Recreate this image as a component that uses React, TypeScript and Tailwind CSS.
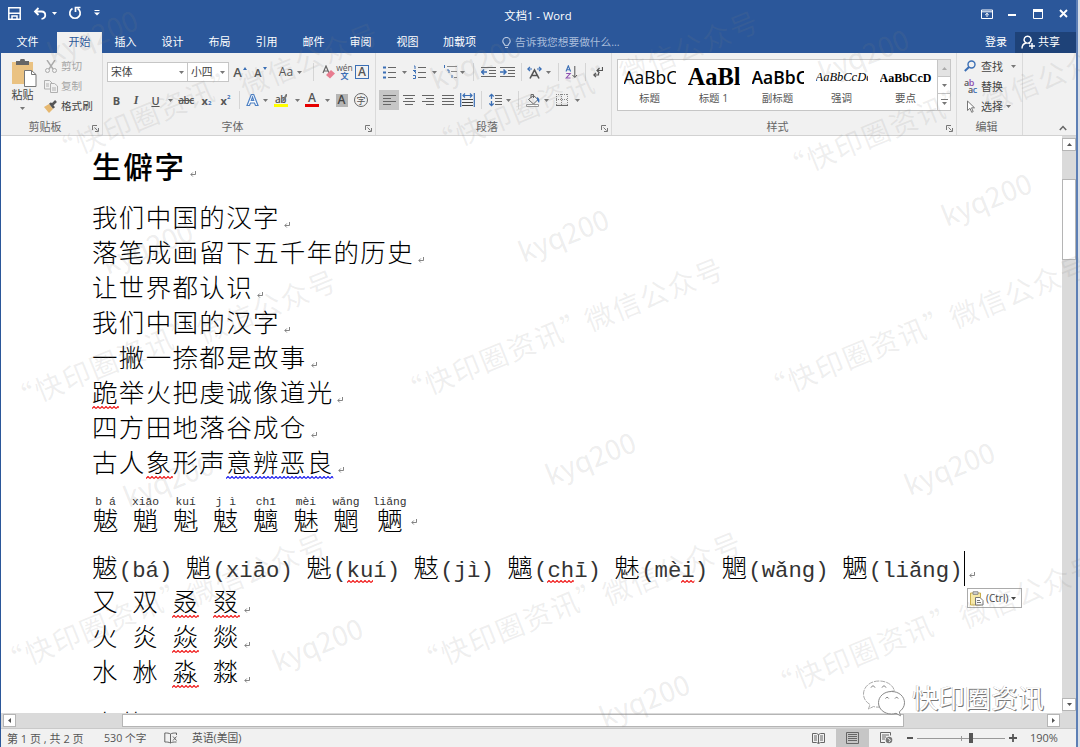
import type { ReactNode } from "react";
import { clsx } from "clsx";

const UI_FONT = "font-['Open_Sans','Noto_Sans_CJK_SC',sans-serif]";
const DOC_FONT = "font-['Liberation_Mono','Noto_Sans_CJK_SC',monospace]";

const tabs = [
  { label: "文件", width: "w-[56px] pr-[3px]" },
  { label: "开始", width: "w-[45px]", active: true },
  { label: "插入", width: "w-[47px]" },
  { label: "设计", width: "w-[47px]" },
  { label: "布局", width: "w-[47px]" },
  { label: "引用", width: "w-[47px]" },
  { label: "邮件", width: "w-[47px]" },
  { label: "审阅", width: "w-[47px]" },
  { label: "视图", width: "w-[47px]" },
  { label: "加载项", width: "w-[57px]" },
];

const styles = [
  { sample: "AaBbC", name: "标题", font: "text-[17.5px] font-['Open_Sans',sans-serif]" },
  { sample: "AaBl", name: "标题 1", font: "text-[24.5px] font-bold font-['Liberation_Serif',serif]" },
  { sample: "AaBbC", name: "副标题", font: "text-[17.5px] font-semibold font-['Open_Sans',sans-serif]" },
  { sample: "AaBbCcDc", name: "强调", font: "text-[12.5px] italic text-[#444] font-['Liberation_Serif',serif]" },
  { sample: "AaBbCcD", name: "要点", font: "text-[12px] font-bold font-['Liberation_Serif',serif]" },
];

type Mark = "red" | "blue";
type Run = { text: string; mark?: Mark };

const verses: Run[][] = [
  [{ text: "我们中国的汉字" }],
  [{ text: "落笔成画留下五千年的历史" }],
  [{ text: "让世界都认识" }],
  [{ text: "我们中国的汉字" }],
  [{ text: "一撇一捺都是故事" }],
  [{ text: "跪", mark: "red" }, { text: "举火把虔诚像道光" }],
  [{ text: "四方田地落谷成仓" }],
  [{ text: "古人" }, { text: "象", mark: "red" }, { text: "形声" }, { text: "意辨恶良", mark: "blue" }],
];

const rubies = [
  ["魃", "b á"],
  ["魈", "xiāo"],
  ["魁", "kuí"],
  ["鬾", "j ì"],
  ["魑", "chī"],
  ["魅", "mèi"],
  ["魍", "wǎng"],
  ["魉", "liǎng"],
];

const glossary: Run[] = [
  { text: "魃(bá) 魈(xiāo) 魁(" },
  { text: "ku", mark: "red" },
  { text: "í) 鬾(jì) 魑(" },
  { text: "ch", mark: "red" },
  { text: "ī) 魅(mè" },
  { text: "i", mark: "red" },
  { text: ") 魍(wǎng) 魉(liǎng)" },
];

const stacked: Run[][] = [
  [{ text: "又 双 " }, { text: "叒", mark: "red" }, { text: " " }, { text: "叕", mark: "red" }],
  [{ text: "火 炎 " }, { text: "焱", mark: "red" }, { text: " 燚" }],
  [{ text: "水 沝 " }, { text: "淼", mark: "red" }, { text: " 㵘" }],
];

const watermarks = [
  { text: "kyq200", x: 92, y: 35 },
  { text: "kyq200", x: 475, y: 61 },
  { text: "kyq200", x: 863, y: 54 },
  { text: "kyq200", x: 147, y: 246 },
  { text: "kyq200", x: 563, y: 234 },
  { text: "kyq200", x: 986, y: 198 },
  { text: "kyq200", x: 168, y: 479 },
  { text: "kyq200", x: 590, y: 457 },
  { text: "kyq200", x: 949, y: 467 },
  { text: "kyq200", x: 317, y: 643 },
  { text: "kyq200", x: 644, y: 699 },
  { text: "微信公众号", x: 309, y: 58 },
  { text: "微信公众号", x: 689, y: 46 },
  { text: "微信公众号", x: 1052, y: 74 },
  { text: "微信公众号", x: 267, y: 305 },
  { text: "微信公众号", x: 654, y: 293 },
  { text: "微信公众号", x: 1019, y: 290 },
  { text: "微信公众号", x: 257, y: 568 },
  { text: "微信公众号", x: 672, y: 567 },
  { text: "微信公众号", x: 1029, y: 590 },
  { text: "“快印圈资讯”", x: 145, y: 115 },
  { text: "“快印圈资讯”", x: 525, y: 107 },
  { text: "“快印圈资讯”", x: 876, y: 132 },
  { text: "“快印圈资讯”", x: 104, y: 363 },
  { text: "“快印圈资讯”", x: 494, y: 356 },
  { text: "“快印圈资讯”", x: 857, y: 353 },
  { text: "“快印圈资讯”", x: 94, y: 626 },
  { text: "“快印圈资讯”", x: 510, y: 626 },
  { text: "“快印圈资讯”", x: 864, y: 650 },
];

function Svg({ w, h, className, children }: { w: number; h: number; className?: string; children: ReactNode }) {
  return (
    <svg width={w} height={h} viewBox={`0 0 ${w} ${h}`} fill="none" className={clsx("shrink-0", className)}>
      {children}
    </svg>
  );
}

function Cell({ w, children, className }: { w: string; children?: ReactNode; className?: string }) {
  return <div className={clsx("flex h-5 shrink-0 items-center justify-center", w, className)}>{children}</div>;
}

function Caret({ className = "text-[#777]" }: { className?: string }) {
  return (
    <Svg w={5} h={3} className={className}>
      <path d="M0 0h5L2.5 3z" fill="currentColor" />
    </Svg>
  );
}

function Divider({ w }: { w: string }) {
  return (
    <Cell w={w}>
      <div className="h-[18px] w-px bg-[#d5d5d5]" />
    </Cell>
  );
}

function Launcher() {
  return (
    <Svg w={7} h={7} className="mt-[3px] text-[#777]">
      <path d="M.5 5V.5H5M2.5 2.5l3 3M6.5 3v3.5H3" stroke="currentColor" />
    </Svg>
  );
}

function Group({ label, w, children, launcher = true }: { label: string; w: string; children: ReactNode; launcher?: boolean }) {
  return (
    <section className={clsx("flex shrink-0 flex-col border-r border-[#dadada]", w)}>
      <div className="h-[64px]">{children}</div>
      <div className="flex h-[18px] items-center pr-[3px] pt-px">
        <span className="flex-1 pr-[3px] text-center text-[11px] leading-none text-[#666]">{label}</span>
        {launcher && <Launcher />}
      </div>
    </section>
  );
}

// Horizontal text lines, each given as [x1, x2, y]
function Lines({ rows, color = "#666" }: { rows: number[][]; color?: string }) {
  return (
    <>
      {rows.map(([a, b, y]) => (
        <path key={y} d={`M${a} ${y}H${b}`} stroke={color} />
      ))}
    </>
  );
}

function TitleBar() {
  return (
    <header className="flex h-8 items-center bg-[#2b579a] text-white">
      <div className="flex w-[419px] items-center pb-[6px] pl-[7px]">
        <Svg w={13} h={13}>
          <path d="M.8.8h11.4v11.4H.8zM1 6.300h11M4 12V9h5v3" stroke="#fff" strokeWidth="1.500" />
        </Svg>
        <Svg w={14} h={13} className="ml-3">
          <path d="M5.5 1 2 4.5 5.5 8M2 4.5h6.5c5 0 5 7.300 0 7.300" stroke="#fff" strokeWidth="1.800" />
        </Svg>
        <Caret className="ml-[5px] text-white" />
        <Svg w={14} h={14} className="ml-[11px]">
          <path d="M4.500 2.500A5.200 5.200 0 1 0 9.500 2.500M7.500 6V1.500h5" stroke="#fff" strokeWidth="1.700" />
        </Svg>
        <Svg w={6} h={6} className="ml-[12px]">
          <path d="M.5 .5h5" stroke="#fff" />
          <path d="M0 2.500h6l-3 3z" fill="#fff" />
        </Svg>
      </div>
      <h1 className="w-[236px] text-center text-[11.300px] leading-none">文档1 - Word</h1>
      <div className="flex flex-1 items-center justify-end pb-[5px] pr-[8px]">
        <Svg w={12} h={10}>
          <path d="M.5 1h11v8.500H.5zM.5 2.800h11M6 8V4.500M4.200 6 6 4.300 7.800 6" stroke="#fff" />
        </Svg>
        <Svg w={10} h={10} className="ml-[14px]">
          <path d="M1 6h8" stroke="#fff" strokeWidth="2" />
        </Svg>
        <Svg w={10} h={10} className="ml-4">
          <path d="M.5 .5h9v9h-9z" stroke="#fff" />
          <path d="M0 0h10v3H0z" fill="#fff" />
        </Svg>
        <Svg w={9} h={9} className="ml-4">
          <path d="m1 1 7 7M8 1 1 8" stroke="#fff" strokeWidth="1.900" />
        </Svg>
      </div>
    </header>
  );
}

function TabBar() {
  return (
    <nav className="flex h-[21px] items-center bg-[#2b579a] text-[11px] leading-none text-white">
      {tabs.map((tab) => (
        <span
          key={tab.label}
          className={clsx(
            "flex h-full shrink-0 items-center justify-center pb-[3px]",
            tab.width,
            tab.active && "bg-[#f1f1f1] text-[#2b579a]"
          )}
        >
          {tab.label}
        </span>
      ))}
      <Svg w={9} h={12} className="ml-[14px]">
        <path d="M3 8.500C3 7 .8 6.500.8 4.200a3.700 3.700 0 0 1 7.400 0C8.200 6.500 6 7 6 8.500zM3 10.500h3" stroke="#b9c9e2" strokeWidth="1.200" />
      </Svg>
      <span className="ml-[4px] pb-px text-[10.700px] text-[#a9bddb]">告诉我您想要做什么...</span>
      <div className="flex h-full flex-1 items-center justify-end">
        <span className="mr-[8px] pb-[2px]">登录</span>
        <div className="flex h-full w-[61px] items-center gap-[3px] bg-[#1e4278] pb-[2px] pl-[6px]">
          <Svg w={14} h={14}>
            <path d="M6.500 8.200a3.500 3.500 0 1 1 .2 0M1 13.500c0-3 2-5 4-5.500M11 8v6M8 11h6M8 8.200l1 .8" stroke="#fff" strokeWidth="1.400" />
          </Svg>
          <span>共享</span>
        </div>
      </div>
    </nav>
  );
}

function ClipboardGroup() {
  return (
    <Group label="剪贴板" w="w-[102px]">
      <div className="flex h-full">
        <div className="flex w-[43px] flex-col items-center pt-[6px]">
          <Svg w={26} h={28} className="ml-[3px]">
            <path d="M1 3h21v22H1z" fill="#eac282" />
            <path d="M5 2h4a2.500 2.500 0 0 1 5 0h4v4H5z" fill="#666" />
            <path d="M13.500 11.500h7l4.500 4v12H13.500z" fill="#fff" stroke="#777" />
            <path d="M20.500 11.500v4H25" stroke="#777" />
          </Svg>
          <span className="mt-[2px] text-[11px] leading-none text-[#444]">粘贴</span>
          <Caret className="mt-[7px] text-[#777]" />
        </div>
        <div className="flex flex-col gap-2 pt-[7px] text-[10.600px] leading-none text-[#a5a5a5]">
          <div className="flex h-3 items-center gap-[3px]">
            <Svg w={14} h={13}>
              <path d="m3 0 6 9M11 0 5 9" stroke="#aaa" strokeWidth="1.400" />
              <circle cx="3.500" cy="10.500" r="2" stroke="#aaa" />
              <circle cx="10.500" cy="10.500" r="2" stroke="#aaa" />
            </Svg>
            剪切
          </div>
          <div className="flex h-3 items-center gap-[3px]">
            <Svg w={14} h={13}>
              <path d="M.5.5h5L8 3v6H.5zM2 4h3M2 6h3" stroke="#b0b0b0" />
              <path d="M6.500 3.500h4l3 2.500v6.500h-7z" fill="#f1f1f1" stroke="#b0b0b0" />
              <path d="M8 8h4M8 10h4" stroke="#b0b0b0" />
            </Svg>
            复制
          </div>
          <div className="flex h-3 items-center gap-[3px] text-[#444]">
            <Svg w={14} h={13}>
              <path d="m0 7 5-3 4 5-4 4z" fill="#e6b870" />
              <path d="m6 3 4 5M8 5l4-4" stroke="#555" strokeWidth="2.600" />
            </Svg>
            格式刷
          </div>
        </div>
      </div>
    </Group>
  );
}

function FontGroup() {
  return (
    <Group label="字体" w="w-[273px]">
      <div className="flex flex-col gap-2 pl-1 pt-[9px] leading-none text-[#555]">
        <div className="flex h-5 items-center">
          <div className="flex h-5 w-[81px] items-center justify-between border border-[#c6c6c6] bg-white px-[3px] text-[10.800px] text-[#444]">
            宋体 <Caret />
          </div>
          <div className="flex h-5 w-[41px] items-center justify-between border border-l-0 border-[#c6c6c6] bg-white px-[3px] text-[10.800px] text-[#444]">
            小四 <Caret />
          </div>
          <Cell w="w-[22px]" className="gap-px">
            <span className="text-[13px] font-semibold">A</span>
            <Svg w={4} h={10}><path d="M0 3h4L2 0z" fill="#3b6fb5" /></Svg>
          </Cell>
          <Cell w="w-[19px]" className="gap-px">
            <span className="text-[11px] font-semibold">A</span>
            <Svg w={4} h={10}><path d="M0 0h4L2 3z" fill="#3b6fb5" /></Svg>
          </Cell>
          <Cell w="w-[30px]" className="pl-[2px] text-[12px]">Aa</Cell>
          <Cell w="w-[6px]"><Caret className="-ml-2 text-[#777]" /></Cell>
          <Divider w="w-[15px]" />
          <Cell w="w-[14px]">
            <Svg w={13} h={14}>
              <path d="M1 8 4 1l3 7M2 6h4" stroke="#666" strokeWidth="1.200" />
              <path d="m4 10 5-5 4 3.500-5 5z" fill="#e87d90" />
            </Svg>
          </Cell>
          <Cell w="w-[19px]" className="flex-col">
            <span className="text-[8.500px] leading-[8px]">wén</span>
            <span className="text-[8px] font-bold leading-[8px] text-[#3b6fb5]">文</span>
          </Cell>
          <Cell w="w-[16px]">
            <span className="flex size-[14px] items-center justify-center border border-[#3b6fb5] text-[12px] font-semibold">A</span>
          </Cell>
        </div>
        <div className="flex h-5 items-center">
          <Cell w="w-[19px]" className="text-[11px] font-bold">B</Cell>
          <Cell w="w-[20px]" className="font-['Liberation_Serif',serif] text-[12px] font-bold italic">I</Cell>
          <Cell w="w-[19px]" className="text-[11px] font-semibold underline">U</Cell>
          <Cell w="w-[10px]"><Caret /></Cell>
          <Cell w="w-[22px]" className="text-[10px] font-semibold tracking-tighter line-through">abc</Cell>
          <Cell w="w-[19px]" className="text-[11px] font-bold">
            x<span className="pt-[6px] text-[6px] text-[#3b6fb5]">2</span>
          </Cell>
          <Cell w="w-[19px]" className="text-[11px] font-bold">
            x<span className="pb-[7px] text-[6px] text-[#3b6fb5]">2</span>
          </Cell>
          <Divider w="w-[8px]" />
          <Cell w="w-[18px]">
            <Svg w={13} h={14}>
              <path d="M1 12.500 5.300 1.500h2.400L12 12.500H9.500L8.500 10h-4l-1 2.500zM5.300 7.500h2.400L6.500 4z" stroke="#4d80c4" strokeWidth="1.200" fill="#fff" />
            </Svg>
          </Cell>
          <Cell w="w-[9px]"><Caret /></Cell>
          <Cell w="w-[22px]">
            <div className="flex flex-col items-center">
              <div className="flex items-center">
                <span className="text-[10px] font-semibold leading-[10px] tracking-tighter">ab</span>
                <Svg w={5} h={9} className="-ml-1"><path d="M5 0 1 7" stroke="#777" strokeWidth="2" /></Svg>
              </div>
              <div className="h-[3px] w-[14px] bg-[#ffff00]" />
            </div>
          </Cell>
          <Cell w="w-[10px]"><Caret /></Cell>
          <Cell w="w-[20px]">
            <div className="flex flex-col items-center">
              <span className="text-[12px] font-semibold leading-[10px]">A</span>
              <div className="mt-px h-[3px] w-[14px] bg-[#e60000]" />
            </div>
          </Cell>
          <Cell w="w-[10px]"><Caret /></Cell>
          <Cell w="w-[19px]">
            <span className="flex h-[13px] w-3 items-center justify-center bg-[#b5b5b5] text-[12px] font-semibold text-[#444]">A</span>
          </Cell>
          <Cell w="w-[20px]">
            <span className="flex size-[14px] items-center justify-center rounded-full border border-[#666] text-[9px]">字</span>
          </Cell>
        </div>
      </div>
    </Group>
  );
}

function ParagraphGroup() {
  return (
    <Group label="段落" w="w-[236px]">
      <div className="flex flex-col gap-2 pl-[5px] pt-[9px]">
        <div className="flex h-5 items-center">
          <Cell w="w-[17px]">
            <Svg w={13} h={13}>
              <path d="M0 1.500h3M0 6.500h3M0 11.500h3" stroke="#3b6fb5" strokeWidth="2" />
              <Lines rows={[[5, 13, 1.5], [5, 13, 6.5], [5, 13, 11.5]]} />
            </Svg>
          </Cell>
          <Cell w="w-[13px]"><Caret /></Cell>
          <Cell w="w-[17px]">
            <Svg w={13} h={14}>
              <path d="M1 1h1v3M0 5.500h3M1 6.500h1.500v2M0 10.500h2.500v3H0" stroke="#3b6fb5" />
              <Lines rows={[[5, 13, 2.5], [5, 13, 7.5], [5, 13, 12.5]]} />
            </Svg>
          </Cell>
          <Cell w="w-[13px]"><Caret /></Cell>
          <Cell w="w-[17px]">
            <Svg w={14} h={14}>
              <path d="M1.500 0v3M4 5h2v3M9 10v3" stroke="#3b6fb5" />
              <Lines rows={[[4, 14, 1.5], [8, 14, 6.5], [11, 14, 12.5]]} color="#888" />
            </Svg>
          </Cell>
          <Cell w="w-[9px]"><Caret /></Cell>
          <Divider w="w-[12px]" />
          <Cell w="w-[18px]">
            <Svg w={15} h={13}>
              <Lines rows={[[0, 15, 1.5], [8, 15, 4.5], [8, 15, 7.5], [0, 15, 10.5]]} />
              <path d="M0 6h6M3 3.500.8 6 3 8.500" stroke="#3b6fb5" strokeWidth="1.500" />
            </Svg>
          </Cell>
          <Cell w="w-[20px]">
            <Svg w={15} h={13}>
              <Lines rows={[[0, 15, 1.5], [8, 15, 4.5], [8, 15, 7.5], [0, 15, 10.5]]} />
              <path d="M0 6h6M3.500 3.500 6 6 3.500 8.500" stroke="#3b6fb5" strokeWidth="1.500" />
            </Svg>
          </Cell>
          <Divider w="w-[8px]" />
          <Cell w="w-[19px]">
            <Svg w={15} h={13}>
              <path d="M3 12.500 7.500 4l4.500 8.500M5 9.500h5" stroke="#555" strokeWidth="1.600" />
              <path d="M1 3h4M10 3h4M3 .8.8 3 3 5.200M12 .8 14.200 3 12 5.200" stroke="#3b6fb5" strokeWidth="1.200" />
            </Svg>
          </Cell>
          <Cell w="w-[9px]"><Caret /></Cell>
          <Divider w="w-[11px]" />
          <Cell w="w-[15px]">
            <Svg w={13} h={14}>
              <path d="M1 6.500 3.300.8l2.300 5.700M2 4.800h2.800" stroke="#3b6fb5" strokeWidth="1.100" />
              <path d="M1.200 8.500h4L1.200 13h4.300" stroke="#8e4fb0" strokeWidth="1.100" />
              <path d="M9.800 1v11M7.500 10l2.300 2.500L12 10" stroke="#555" />
            </Svg>
          </Cell>
          <Divider w="w-[12px]" />
          <Cell w="w-[14px]">
            <Svg w={10} h={12}>
              <path d="M9.500 1v3.500H4.500M6.500 2 4 4.500 6.500 7M5.500 7v2H1M3 6.800.8 9 3 11.200" stroke="#555" strokeWidth="1.200" />
            </Svg>
          </Cell>
        </div>
        <div className="-ml-[2px] flex h-5 items-center">
          <Cell w="w-[20px]" className="bg-[#c6c6c6]">
            <Svg w={13} h={11}><Lines rows={[[0, 13, 0.5], [0, 8, 3.5], [0, 13, 6.5], [0, 8, 9.5]]} /></Svg>
          </Cell>
          <Cell w="w-[19px]">
            <Svg w={12} h={11}><Lines rows={[[0, 12, 0.5], [2, 10, 3.5], [0, 12, 6.5], [2, 10, 9.5]]} /></Svg>
          </Cell>
          <Cell w="w-[20px]">
            <Svg w={12} h={11}><Lines rows={[[0, 12, 0.5], [4, 12, 3.5], [0, 12, 6.5], [4, 12, 9.5]]} /></Svg>
          </Cell>
          <Cell w="w-[19px]">
            <Svg w={12} h={11}><Lines rows={[[0, 12, 0.5], [0, 12, 3.5], [0, 12, 6.5], [0, 12, 9.5]]} /></Svg>
          </Cell>
          <Cell w="w-[20px]">
            <Svg w={15} h={14}>
              <path d="M.7 0v14M14.300 0v14M3 2.500h9M5 .5l-2 2 2 2M10 .5l2 2-2 2" stroke="#3b6fb5" strokeWidth="1.200" />
              <Lines rows={[[2, 13, 6.5], [2, 13, 9.5], [2, 13, 12.5]]} color="#444" />
            </Svg>
          </Cell>
          <Divider w="w-[9px]" />
          <Cell w="w-[18px]">
            <Svg w={13} h={14}>
              <path d="M2.500 1v12M.3 3.500l2.200-2.200 2.200 2.200M.3 10.500l2.200 2.200 2.200-2.200" stroke="#3b6fb5" strokeWidth="1.300" />
              <path d="M0 6h5v2H0z" fill="#f1f1f1" />
              <Lines rows={[[6, 13, 2.5], [6, 13, 5.5], [6, 13, 8.5], [6, 13, 11.5]]} />
            </Svg>
          </Cell>
          <Cell w="w-[8px]"><Caret /></Cell>
          <Divider w="w-[12px]" />
          <Cell w="w-[17px]">
            <Svg w={14} h={14}>
              <path d="m2.500 6.500 5-4 4.500 4-4.500 4.500zM5 5V1.500h2.500V5" stroke="#666" />
              <path d="M11 4c2.500 1 3 3 2 6l-2-3z" fill="#3b6fb5" />
              <path d="M.5 11.500h12v2H.5z" stroke="#999" fill="#fff" />
            </Svg>
          </Cell>
          <Cell w="w-[11px]"><Caret /></Cell>
          <Cell w="w-[20px]">
            <Svg w={12} h={12}>
              <path d="M.5 0v11M5.500 0v11M11.500 0v11M0 .5h12M0 5.500h12" stroke="#888" strokeDasharray="1 1" />
              <path d="M0 11.500h12" stroke="#666" />
            </Svg>
          </Cell>
          <Cell w="w-[10px]"><Caret /></Cell>
        </div>
      </div>
    </Group>
  );
}

function StylesGroup() {
  return (
    <Group label="样式" w="w-[345px]">
      <div className="pl-[5px] pt-[6px]">
        <div className="flex h-[52px] w-[334px] border border-[#c6c6c6] bg-white">
          {styles.map((style) => (
            <div key={style.name} className="flex w-16 shrink-0 flex-col items-center pr-px">
              <div className={clsx("flex h-[33px] w-[52px] items-center overflow-hidden whitespace-nowrap pt-[2px] leading-none text-black", style.font)}>
                {style.sample}
              </div>
              <span className="text-[10.500px] leading-[10px] text-[#555]">{style.name}</span>
            </div>
          ))}
          <div className="-ml-px flex flex-1 flex-col border-l border-[#c6c6c6]">
            <div className="flex flex-1 items-center justify-center bg-[#e3e3e3]"><Caret className="rotate-180 text-[#aaa]" /></div>
            <div className="flex flex-1 items-center justify-center border-y border-[#c6c6c6]"><Caret /></div>
            <div className="flex flex-1 flex-col items-center justify-center gap-[2px]">
              <div className="h-px w-[7px] bg-[#777]" />
              <Caret />
            </div>
          </div>
        </div>
      </div>
    </Group>
  );
}

function EditingGroup() {
  return (
    <Group label="编辑" w="w-[66px]" launcher={false}>
      <div className="flex flex-col gap-2 pl-[7px] pt-[7px] text-[11px] leading-none text-[#444]">
        <div className="flex h-3 items-center">
          <Svg w={13} h={12}>
            <circle cx="7.500" cy="4.500" r="3.500" stroke="#3b6fb5" strokeWidth="1.400" />
            <path d="M5 7 .8 11" stroke="#3b6fb5" strokeWidth="2" />
          </Svg>
          <span className="ml-[4px]">查找</span>
          <Caret className="ml-[8px] text-[#777]" />
        </div>
        <div className="flex h-3 items-center">
          <div className="flex w-[13px] flex-col text-[9px] font-semibold leading-[7px] tracking-tighter">
            <span><span className="text-[#555]">a</span><span className="text-[#8e4fb0]">b</span></span>
            <span className="pl-[4px]"><span className="text-[#555]">a</span><span className="text-[#3b6fb5]">c</span></span>
          </div>
          <span className="ml-[4px]">替换</span>
        </div>
        <div className="flex h-3 items-center">
          <Svg w={13} h={13}>
            <path d="M3.500 1v9.500L6 8.300l1.700 4 1.500-.7-1.700-3.800h3z" stroke="#777" fill="#fff" />
          </Svg>
          <span className="ml-[4px]">选择</span>
          <Caret className="ml-[3px] text-[#777]" />
        </div>
      </div>
    </Group>
  );
}

function Ribbon() {
  return (
    <div className="flex h-[83px] border-b border-[#d2d2d2] bg-[#f1f1f1]">
      <ClipboardGroup />
      <FontGroup />
      <ParagraphGroup />
      <StylesGroup />
      <EditingGroup />
      <div className="flex flex-1 items-end justify-end pb-1 pr-[9px]">
        <Svg w={8} h={6}><path d="m.8 5 3.200-3.500L7.200 5" stroke="#666" strokeWidth="1.500" /></Svg>
      </div>
    </div>
  );
}

function Squiggle({ color }: { color: Mark }) {
  const id = `wave-${color}`;
  return (
    <svg className="absolute bottom-[5px] left-0 h-[3px] w-full">
      <defs>
        <pattern id={id} width="4" height="3" patternUnits="userSpaceOnUse">
          <path d="M0 2.500 2 .5 4 2.500" fill="none" stroke={color === "red" ? "#f01818" : "#2020f0"} strokeWidth="1.200" />
        </pattern>
      </defs>
      <rect width="100%" height="3" fill={`url(#${id})`} />
    </svg>
  );
}

function ParagraphMark() {
  return (
    <Svg w={6} h={6} className="ml-[4px] mt-[8px]">
      <path d="M5.500 0v3.500H1M2.800 1.500.8 3.500l2 2" stroke="#777" strokeWidth=".9" />
    </Svg>
  );
}

// Han glyphs sit on a grid twice as wide as the Latin ones
function Glyphs({ text }: { text: string }) {
  return (
    <>
      {(text.match(/[\u3400-\u9fff]+|[^\u3400-\u9fff]+/g) ?? []).map((part, i) =>
        /[\u3400-\u9fff]/.test(part) ? (
          <span key={i} className="text-[25.500px] tracking-[1.330px]">{part}</span>
        ) : (
          <span key={i} className="text-[22.300px] text-[#333]">{part}</span>
        )
      )}
    </>
  );
}

function Line({ runs, caret }: { runs: Run[]; caret?: boolean }) {
  return (
    <p className="flex h-[34.940px] items-center whitespace-pre leading-[34.940px]">
      {runs.map((run, i) => (
        <span key={i} className="relative block h-full">
          <Glyphs text={run.text} />
          {run.mark && <Squiggle color={run.mark} />}
        </span>
      ))}
      {caret && <span className="-mt-1 ml-px h-[35px] w-px shrink-0 bg-black" />}
      <ParagraphMark />
    </p>
  );
}

function Page() {
  return (
    <main className={clsx("min-w-0 flex-1 overflow-hidden bg-white pl-[91px] pt-[15px] font-light text-black", DOC_FONT)}>
      <h2 className="flex h-[38px] items-center text-[29.500px] font-medium leading-[38px] tracking-[1.700px]">
        生僻字
        <ParagraphMark />
      </h2>
      <div className="mt-[15px]">
        {verses.map((runs, i) => (
          <Line key={i} runs={runs} />
        ))}
      </div>
      <div className="mt-3 flex h-[44px] items-center">
        {rubies.map(([han, pinyin]) => (
          <div key={han} className={clsx("flex shrink-0 flex-col items-center", pinyin === "liǎng" ? "w-[34px]" : "mr-[13.100px] w-[27px]")}>
            <span className="-mt-[2px] whitespace-pre text-[11.300px] font-normal leading-[15px] text-[#333]">{pinyin}</span>
            <span className="text-[25.500px] leading-[28px]">{han}</span>
          </div>
        ))}
        <ParagraphMark />
      </div>
      <div className="mt-[14px]">
        <Line runs={glossary} caret />
        {stacked.map((runs, i) => (
          <Line key={i} runs={runs} />
        ))}
        <div className="mt-[17px]">
          <Line runs={[{ text: "古茕" }]} />
        </div>
      </div>
    </main>
  );
}

function VerticalScroll() {
  return (
    <div className="flex w-[14px] shrink-0 flex-col bg-[#dadada]">
      <div className="mt-[2px] flex h-[13px] items-center justify-center border border-[#b5b5b5] bg-white"><Caret className="rotate-180 text-[#555]" /></div>
      <div className="mt-7 h-[81px] border border-[#b5b5b5] bg-white" />
      <div className="flex-1" />
      <div className="mb-[2px] flex h-[13px] items-center justify-center border border-[#b5b5b5] bg-white"><Caret className="text-[#555]" /></div>
    </div>
  );
}

function HorizontalScroll() {
  return (
    <div className="flex h-[15px] items-center bg-[#dadada] pl-[2px] pr-[16px]">
      <div className="flex h-[13px] w-[13px] items-center justify-center border border-[#b5b5b5] bg-white"><Caret className="rotate-90 text-[#555]" /></div>
      <div className="ml-[106px] h-[13px] w-[782px] border border-[#b5b5b5] bg-white" />
      <div className="flex-1" />
      <div className="flex h-[13px] w-[13px] items-center justify-center border border-[#b5b5b5] bg-white"><Caret className="-rotate-90 text-[#555]" /></div>
    </div>
  );
}

function StatusBar() {
  return (
    <footer className="flex h-[19px] items-center border-t border-[#c9c9c9] bg-[#f1f1f1] text-[10.500px] leading-none text-[#555]">
      <span className="w-[97px] whitespace-nowrap pl-[6px] text-[11px]">第 1 页 , 共 2 页</span>
      <span className="w-[60px] pl-[6px] text-[10.700px]">530 个字</span>
      <Svg w={14} h={12} className="ml-[6px]">
        <path d="M6.500 2v9M6.500 2C5 1 3 1 .8 1v9c2.200 0 4 0 5.700 1 1.500-1 3-1 6-1M6.500 2C8 1 10 1 12.500 1v2M9 4.500l3.500 4M12.500 4.500 9 8.500" stroke="#666" />
      </Svg>
      <span className="ml-[14px] text-[10.800px]">英语(美国)</span>
      <div className="flex h-full flex-1 items-center justify-end">
        <Svg w={13} h={11}>
          <path d="M6.500 1.500v9M6.500 1.500l-2-1h-4v9h4l2 1 2-1h4v-9h-4zM2 3h3M2 5h3M2 7h3M8 3h3M8 5h3M8 7h3" stroke="#666" />
        </Svg>
        <div className="ml-[11px] flex h-full w-[33px] items-center justify-center bg-[#c6c6c6]">
          <Svg w={13} h={12}>
            <path d="M.5.5h12v11H.5zM2 2.500h9M2 4.500h9M2 6.500h9M2 8.500h9" stroke="#666" />
          </Svg>
        </div>
        <Svg w={13} h={12} className="ml-[11px]">
          <path d="M5 10.500H.5V.5h10v3M2 3h7M2 5h4M2 7h3" stroke="#666" />
          <circle cx="9" cy="8" r="3.300" fill="#777" />
          <path d="m7.500 6 3 2-1.500 2" stroke="#eee" />
        </Svg>
        <div className="ml-[14px] h-[2px] w-[6px] bg-[#555]" />
        <div className="ml-1 flex w-[88px] items-center">
          <div className="h-px w-[44px] bg-[#999]" />
          <div className="h-[5px] w-px bg-[#999]" />
          <div className="h-px w-[7px] bg-[#999]" />
          <div className="h-[10px] w-[4px] bg-[#555]" />
          <div className="h-px flex-1 bg-[#999]" />
        </div>
        <Svg w={8} h={8} className="ml-[4px]"><path d="M0 4h8M4 0v8" stroke="#555" strokeWidth="1.800" /></Svg>
        <span className="ml-[13px] w-[46px] pb-px text-[11px]">190%</span>
      </div>
    </footer>
  );
}

function PasteOptions() {
  return (
    <div className="absolute left-[967px] top-[588px] flex h-5 w-[55px] items-center border border-[#ababab] bg-white pl-[2px] text-[10px] leading-none text-[#444]">
      <Svg w={14} h={15}>
        <path d="M.5 2h10v12H.5z" fill="#f7e9a8" stroke="#c9ae4f" />
        <path d="M3 .8h5v2.500H3z" fill="#ddd" stroke="#888" />
        <path d="M5.500 6.500h4.500l3 3v4.500H5.500z" fill="#fff" stroke="#777" />
        <path d="M7 9.500h3M7 11.500h4" stroke="#777" />
      </Svg>
      <span className="ml-[2px]">(Ctrl)</span>
      <Caret className="ml-[3px] text-[#444]" />
    </div>
  );
}

function WechatBadge() {
  return (
    <div className="absolute left-[862px] top-[679px] flex items-center gap-[6px]">
      <Svg w={44} h={38}>
        <path d="M17 2C8 2 1.500 8 1.500 15c0 4.500 2.500 8 6.500 10.500L6.500 30l5-2.500c2 .6 4 .8 6 .7C16 20 23 12 32.500 12 31 6 25 2 17 2z" fill="#fff" stroke="#aaa" strokeDasharray="5 1" />
        <path d="M29.500 12.500c-7.500 0-13 5-13 11.200S22 35 29.500 35c1.500 0 3-.2 4.500-.7l4.500 2.500-1.200-4C40.500 30.500 42.500 27.500 42.500 23.700c0-6.200-5.500-11.200-13-11.200z" fill="#fff" stroke="#888" />
        <path d="M9 8.500c1-2 3-2 4 0M20 8.500c1-2 3-2 4 0M23.500 19.500c.8-1.500 2.500-1.500 3.200 0M33 19.500c.8-1.500 2.500-1.500 3.200 0" stroke="#777" />
      </Svg>
      <span className="text-[26.400px] leading-none text-white [text-shadow:1px_1px_0_#777,-.5px_-.5px_0_#bbb]">快印圈资讯</span>
    </div>
  );
}

function Watermarks() {
  return (
    <div className="pointer-events-none absolute inset-0 overflow-hidden">
      {watermarks.map((mark, i) => (
        <span
          key={i}
          className={clsx(
            "absolute -translate-x-1/2 -translate-y-1/2 -rotate-[22deg] whitespace-nowrap font-['Noto_Sans_CJK_SC',sans-serif] text-[28px] leading-none",
            mark.text === "kyq200" ? "tracking-[.2px] text-[#808080]/15" : "tracking-[1.500px] text-[#808080]/13"
          )}
          style={{ left: mark.x, top: mark.y }}
        >
          {mark.text}
        </span>
      ))}
    </div>
  );
}

export default function App() {
  return (
    <div className={clsx("relative flex h-[747px] w-[1080px] overflow-hidden bg-[#d9dfe8]", UI_FONT)}>
      <div className="flex w-[1078px] flex-col border-l border-r-2 border-l-[#2b579a] border-r-[#5d7fb5]">
        <TitleBar />
        <TabBar />
        <Ribbon />
        <div className="flex h-[577px]">
          <Page />
          <VerticalScroll />
        </div>
        <HorizontalScroll />
        <StatusBar />
      </div>
      <PasteOptions />
      <WechatBadge />
      <Watermarks />
    </div>
  );
}
